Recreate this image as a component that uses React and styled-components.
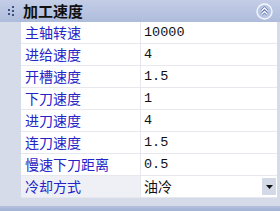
import React from 'react';
import styled, { createGlobalStyle } from 'styled-components';

const GlobalStyle = createGlobalStyle`
  html, body { margin: 0; padding: 0; background: #ffffff; }
  body { font-family: "Noto Sans CJK SC", "Liberation Sans", sans-serif; }
`;

const Panel = styled.div`
  width: 280px;
  height: 211px;
  display: flex;
  flex-direction: column;
  background: #d5dbe9;
  overflow: hidden;
`;

const Header = styled.div`
  height: 22px;
  flex: none;
  display: flex;
  align-items: center;
  background: linear-gradient(#c3cde6, #aebcdc);
`;

const Grip = styled.div`
  width: 21px;
  display: flex;
  justify-content: center;
  align-items: center;
`;

const Title = styled.div`
  flex: 1;
  padding-left: 2px;
  font-size: 15px;
  font-weight: bold;
  color: #101010;
  line-height: 22px;
`;

const Collapse = styled.div`
  width: 17px;
  height: 17px;
  margin-right: 7px;
  display: flex;
`;

const Body = styled.div`
  flex: none;
  padding-left: 21px;
  padding-right: 3px;
`;

const Row = styled.div`
  height: 22px;
  display: grid;
  grid-template-columns: 120px 1fr;
  border-bottom: 1px solid #e6e8ee;
  box-sizing: border-box;
  background: #ffffff;
`;

const Label = styled.div`
  padding-left: 4px;
  font-size: 14px;
  line-height: 21px;
  color: #2424c8;
  white-space: nowrap;
  border-right: 1px solid #e6e8ee;
  background: ${p => (p.$selected ? '#eef0f5' : '#ffffff')};
`;

const Value = styled.div`
  display: flex;
  align-items: center;
  padding-left: 3px;
  font-family: ${p => (p.$cjk ? '"Noto Sans CJK SC", sans-serif' : '"Liberation Mono", monospace')};
  font-size: ${p => (p.$cjk ? '14px' : '13.5px')};
  line-height: 21px;
  color: #111111;
`;

const Text = styled.span`
  flex: 1;
`;

const DropButton = styled.div`
  width: 14px;
  height: 17px;
  margin-right: 1px;
  background: #d3d9e6;
  display: flex;
  align-items: center;
  justify-content: center;
`;

const Spacer = styled.div`
  flex: 1;
`;

const BottomBar = styled.div`
  height: 5px;
  flex: none;
  background: linear-gradient(#b4c0dc, #a2b2d4);
`;

const rows = [
  ['主轴转速', '10000'],
  ['进给速度', '4'],
  ['开槽速度', '1.5'],
  ['下刀速度', '1'],
  ['进刀速度', '4'],
  ['连刀速度', '1.5'],
  ['慢速下刀距离', '0.5'],
];

function GripIcon() {
  return (
    <svg width="8" height="11" viewBox="0 0 8 11">
      <rect x="5" y="0" width="2" height="2" fill="#3d4f80" />
      <rect x="1" y="3" width="2" height="2" fill="#3d4f80" />
      <rect x="5" y="4" width="2" height="2" fill="#3d4f80" />
      <rect x="1" y="7" width="2" height="2" fill="#3d4f80" />
      <rect x="5" y="8" width="2" height="2" fill="#3d4f80" />
    </svg>
  );
}

function CollapseIcon() {
  return (
    <svg width="17" height="17" viewBox="0 0 17 17">
      <circle cx="8.5" cy="8.5" r="7.5" fill="#b9c6e4" stroke="#f4f6fb" strokeWidth="1.4" />
      <path d="M5.5 8 L8.5 5 L11.5 8 M5.5 11.5 L8.5 8.5 L11.5 11.5" fill="none" stroke="#5b6fa6" strokeWidth="2.6" />
      <path d="M5.5 8 L8.5 5 L11.5 8 M5.5 11.5 L8.5 8.5 L11.5 11.5" fill="none" stroke="#ffffff" strokeWidth="1.3" />
    </svg>
  );
}

export default function App() {
  return (
    <>
      <GlobalStyle />
      <Panel>
        <Header>
          <Grip><GripIcon /></Grip>
          <Title>加工速度</Title>
          <Collapse><CollapseIcon /></Collapse>
        </Header>
        <Body>
          {rows.map(([label, value]) => (
            <Row key={label}>
              <Label>{label}</Label>
              <Value><Text>{value}</Text></Value>
            </Row>
          ))}
          <Row>
            <Label $selected>冷却方式</Label>
            <Value $cjk>
              <Text>油冷</Text>
              <DropButton>
                <svg width="7" height="4" viewBox="0 0 7 4">
                  <path d="M0 0 H7 L3.5 4 Z" fill="#111111" />
                </svg>
              </DropButton>
            </Value>
          </Row>
        </Body>
        <Spacer />
        <BottomBar />
      </Panel>
    </>
  );
}
